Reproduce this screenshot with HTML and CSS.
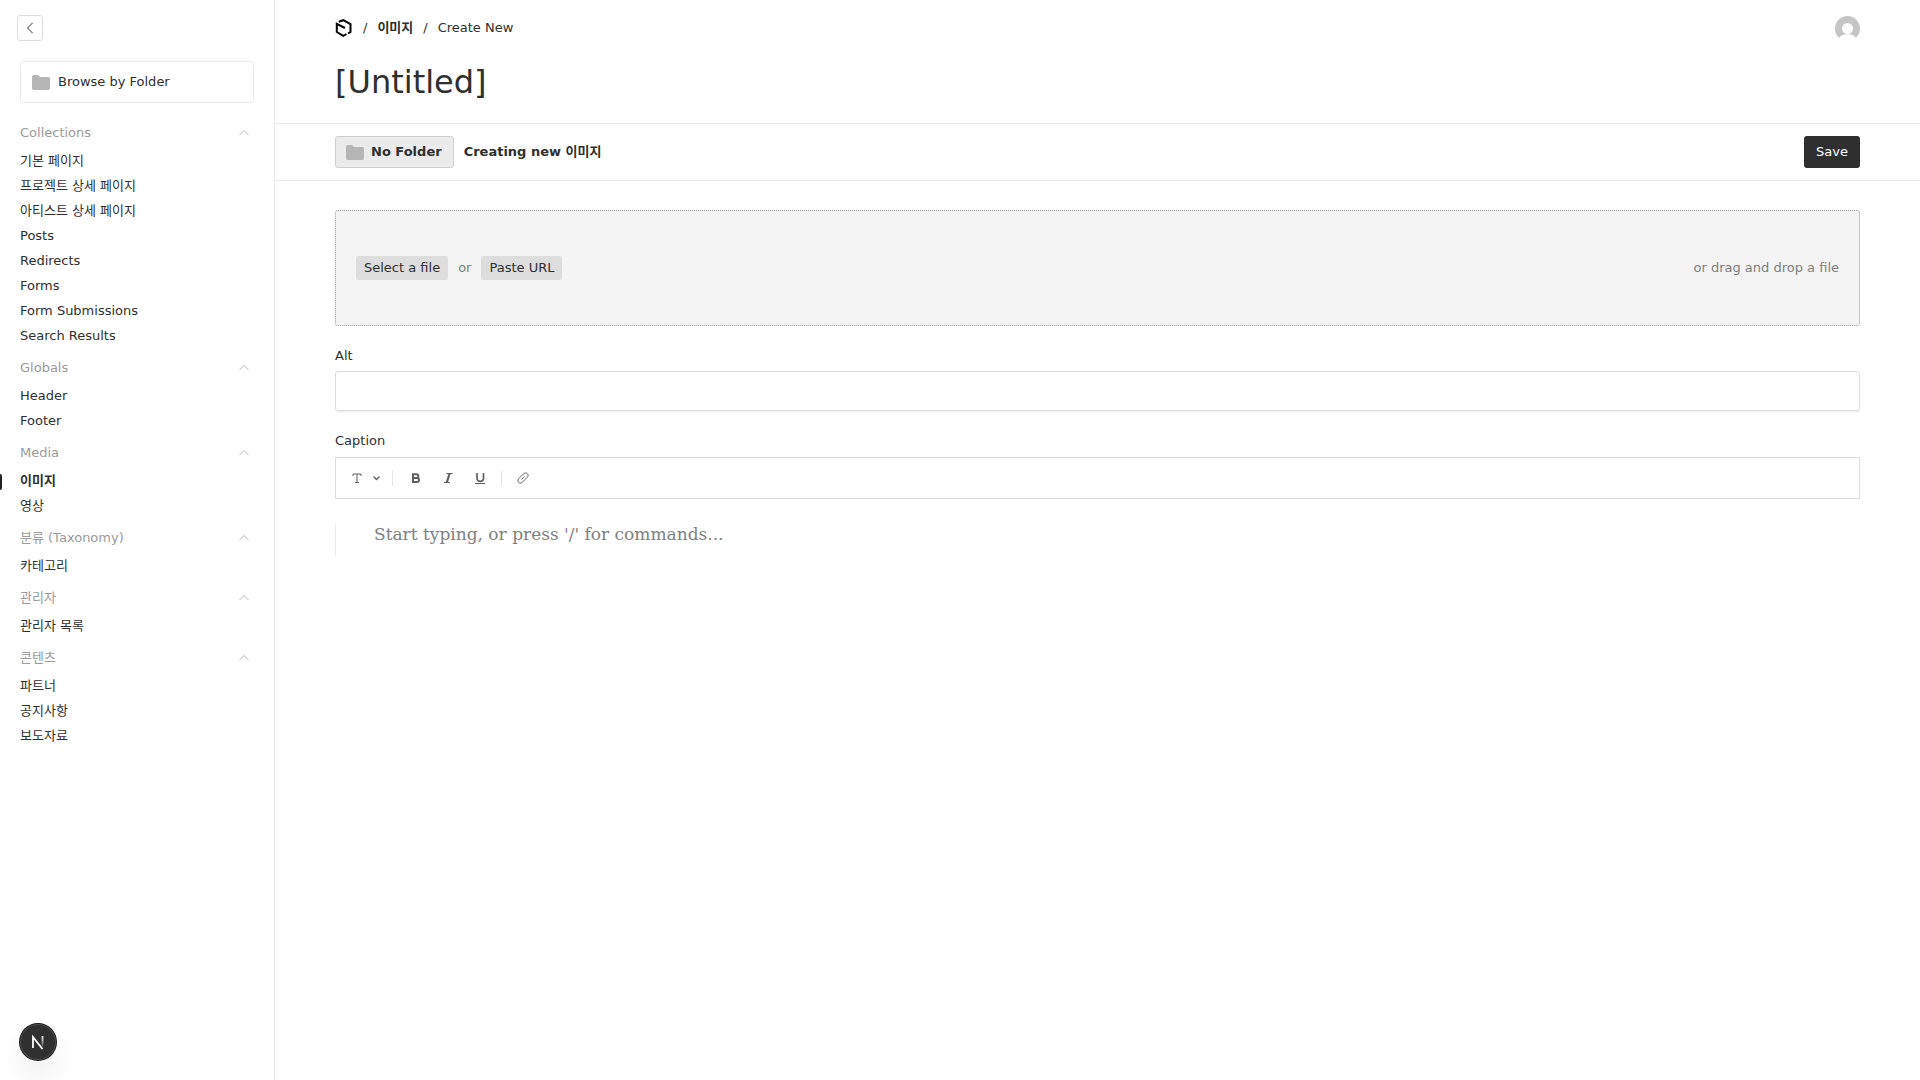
FILE: index.html
```html
<!DOCTYPE html>
<html lang="ko">
<head>
  <meta charset="UTF-8" />
  <meta name="viewport" content="width=device-width, initial-scale=1.0"/>
  <title>Creating - 이미지</title>
  <link rel="stylesheet" href="styles.css">
</head>
<body>
  <svg class="symbols" aria-hidden="true">
    <symbol id="chevron-up" viewBox="0 0 20 20">
      <path d="M5.500 12l4.500-4.500 4.500 4.500" fill="none" stroke="currentColor" />
    </symbol>
    <symbol id="folder" viewBox="0 0 18 15">
      <path d="M2 0h4l2 2h8a2 2 0 0 1 2 2v9a2 2 0 0 1-2 2H2a2 2 0 0 1-2-2V2a2 2 0 0 1 2-2z" fill="currentColor" />
    </symbol>
  </svg>

  <div class="layout">
    <!-- Sidebar -->
    <aside class="sidebar">
      <button type="button" class="nav-toggle" aria-label="Close menu">
        <svg width="20" height="20" viewBox="0 0 20 20"><path d="M12.5 5l-5 5 5 5" fill="none" stroke="currentColor" /></svg>
      </button>

      <nav class="nav">
        <a href="#" class="browse-folder">
          <svg class="folder-icon"><use href="#folder" /></svg>
          Browse by Folder
        </a>

        <div class="nav-group">
          <button type="button" class="nav-group-toggle">Collections <svg class="chevron"><use href="#chevron-up" /></svg></button>
          <a href="#">기본 페이지</a>
          <a href="#">프로젝트 상세 페이지</a>
          <a href="#">아티스트 상세 페이지</a>
          <a href="#">Posts</a>
          <a href="#">Redirects</a>
          <a href="#">Forms</a>
          <a href="#">Form Submissions</a>
          <a href="#">Search Results</a>
        </div>

        <div class="nav-group">
          <button type="button" class="nav-group-toggle">Globals <svg class="chevron"><use href="#chevron-up" /></svg></button>
          <a href="#">Header</a>
          <a href="#">Footer</a>
        </div>

        <div class="nav-group">
          <button type="button" class="nav-group-toggle">Media <svg class="chevron"><use href="#chevron-up" /></svg></button>
          <a href="#" class="active">이미지</a>
          <a href="#">영상</a>
        </div>

        <div class="nav-group">
          <button type="button" class="nav-group-toggle">분류 (Taxonomy) <svg class="chevron"><use href="#chevron-up" /></svg></button>
          <a href="#">카테고리</a>
        </div>

        <div class="nav-group">
          <button type="button" class="nav-group-toggle">관리자 <svg class="chevron"><use href="#chevron-up" /></svg></button>
          <a href="#">관리자 목록</a>
        </div>

        <div class="nav-group">
          <button type="button" class="nav-group-toggle">콘텐츠 <svg class="chevron"><use href="#chevron-up" /></svg></button>
          <a href="#">파트너</a>
          <a href="#">공지사항</a>
          <a href="#">보도자료</a>
        </div>
      </nav>
    </aside>

    <!-- Main content -->
    <main class="main">
      <header class="app-header">
        <div class="breadcrumbs">
          <a href="#" aria-label="Home">
            <svg width="18" height="18" viewBox="0 0 18 18">
              <path d="M3.8 2.800L8.300 1.200l7.200 4v7.800l-2.500 1.500M10 9L1.800 4.800V13l6.500 3.800 3.200-1.800" fill="none" stroke="#000" stroke-width="2" />
            </svg>
          </a>
          <span>/</span>
          <a href="#" class="crumb-link">이미지</a>
          <span>/</span>
          <span>Create New</span>
        </div>
        <a href="#" class="account" aria-label="Account">
          <svg width="25" height="25" viewBox="0 0 25 25">
            <circle cx="12.5" cy="12.5" r="12.5" fill="#c5c5c5" />
            <circle cx="12.5" cy="12.5" r="5.5" fill="#fff" />
            <path d="M3 23.500C5 20 7.500 18.300 12.500 18.300S20 20 22 23.500V25H3z" fill="#fff" />
          </svg>
        </a>
      </header>

      <div class="title-row">
        <h1>[Untitled]</h1>
      </div>

      <div class="doc-controls">
        <button type="button" class="folder-btn">
          <svg class="folder-icon"><use href="#folder" /></svg>
          No Folder
        </button>
        <p class="doc-status">Creating new 이미지</p>
        <button type="submit" form="mediaForm" class="save-btn">Save</button>
      </div>

      <form id="mediaForm" class="edit-form">
        <div class="dropzone">
          <button type="button" class="pill-btn">Select a file</button>
          <span>or</span>
          <button type="button" class="pill-btn">Paste URL</button>
          <span class="drag-text">or drag and drop a file</span>
        </div>

        <div class="field">
          <label for="alt">Alt</label>
          <input type="text" id="alt" name="alt" />
        </div>

        <div class="field">
          <label for="caption">Caption</label>
          <div class="toolbar">
            <button type="button" class="format-btn" aria-label="Text format">
              <svg width="20" height="20" viewBox="0 0 20 20"><path d="M7 8V6h8v2M11 6v8.500M9 14.500h4" fill="none" stroke="currentColor" /></svg>
              <svg width="20" height="20" viewBox="0 0 20 20"><path d="M7.500 8.500l3 3 3-3" fill="none" stroke="currentColor" stroke-width="1.300" /></svg>
            </button>
            <span class="divider"></span>
            <button type="button" class="tool-btn" aria-label="Bold">
              <svg width="20" height="20" viewBox="0 0 20 20"><path d="M8 6.200h3.500a1.800 1.800 0 0 1 0 3.700H8zM8 9.900h4a2 2 0 0 1 0 4.100H8z" fill="none" stroke="currentColor" stroke-width="2" /></svg>
            </button>
            <button type="button" class="tool-btn" aria-label="Italic">
              <svg width="20" height="20" viewBox="0 0 20 20"><path d="M9.500 5.500h6M7 14.500h6" stroke="currentColor" /><path d="M12.700 5.500l-3 9" stroke="currentColor" stroke-width="2.200" /></svg>
            </button>
            <button type="button" class="tool-btn" aria-label="Underline">
              <svg width="20" height="20" viewBox="0 0 20 20"><path d="M8 5v5.200c0 4.200 6.500 4.200 6.500 0V5" fill="none" stroke="currentColor" stroke-width="1.700" /><path d="M6 15.500h10" stroke="currentColor" /></svg>
            </button>
            <span class="divider"></span>
            <button type="button" class="tool-btn" aria-label="Link">
              <svg width="20" height="20" viewBox="0 0 20 20"><path d="M7.500 11.500l3-3M7.200 8.200l2.500-2.500c2.800-2.200 5.900.8 3.600 3.600L10.800 11.800M7.200 8.200L4.700 10.700c-2.300 2.800.8 5.900 3.600 3.600l2.500-2.500" fill="none" stroke="currentColor" /></svg>
            </button>
          </div>
          <textarea id="caption" name="caption" rows="1" placeholder="Start typing, or press '/' for commands..."></textarea>
        </div>
      </form>
    </main>
  </div>

  <!-- Dev tools badge -->
  <button type="button" class="dev-badge" aria-label="Open dev tools">
    <svg width="36" height="36" viewBox="0 0 36 36">
      <defs>
        <linearGradient id="fade" x1="0" y1="12" x2="0" y2="22" gradientUnits="userSpaceOnUse">
          <stop offset="0" stop-color="#fff" />
          <stop offset="1" stop-color="#fff" stop-opacity="0.2" />
        </linearGradient>
      </defs>
      <path d="M13 24V13L22.500 25" fill="none" stroke="#fff" stroke-width="1.800" />
      <path d="M22.500 12v10" stroke="url(#fade)" stroke-width="1.800" />
    </svg>
  </button>
</body>
</html>
```

FILE: styles.css
```css
* {
  box-sizing: border-box;
}
body {
  margin: 0;
  font-family: "DejaVu Sans", "Noto Sans CJK KR", sans-serif;
  font-size: 13px;
  line-height: 20px;
  color: #2f2f2f;
  background-color: #fff;
}
a {
  color: inherit;
  text-decoration: none;
}
button {
  font: inherit;
  color: inherit;
  background: none;
  border: none;
  padding: 0;
  cursor: pointer;
}
svg {
  display: block;
  flex-shrink: 0;
}
.symbols {
  display: none;
}
.layout {
  display: flex;
  min-height: 100vh;
}

/* Sidebar */
.sidebar {
  width: 275px;
  flex-shrink: 0;
  border-right: 1px solid #ebebeb;
  padding: 15px 20px;
}
.nav-toggle {
  display: flex;
  align-items: center;
  justify-content: center;
  width: 26px;
  height: 26px;
  margin-left: -3px;
  border: 1px solid #dddddd;
  border-radius: 3px;
}
.nav {
  padding-top: 20px;
}
.browse-folder {
  display: flex;
  align-items: center;
  gap: 8px;
  height: 42px;
  padding: 0 11px;
  margin-bottom: 20px;
  border: 1px solid #ebebeb;
  border-radius: 4px;
}
.folder-icon {
  width: 18px;
  height: 15px;
  color: #b5b5b5;
}
.nav-group {
  margin-bottom: 9px;
}
.nav-group-toggle {
  display: flex;
  justify-content: space-between;
  align-items: center;
  width: 100%;
  color: #9a9a9a;
  margin-bottom: 6px;
}
.chevron {
  width: 20px;
  height: 20px;
  color: #b5b5b5;
}
.nav-group a {
  display: block;
  line-height: 20px;
  padding: 2px 0 3px;
}
.nav-group .active {
  position: relative;
  font-weight: bold;
}
.nav-group .active::before {
  content: "";
  position: absolute;
  left: -20px;
  top: 5px;
  width: 2px;
  height: 16px;
  background-color: #222;
  border-radius: 0 2px 2px 0;
}

/* Header */
.main {
  flex: 1;
  min-width: 0;
}
.app-header {
  display: flex;
  align-items: center;
  justify-content: space-between;
  height: 56px;
  padding: 0 60px;
}
.breadcrumbs {
  display: flex;
  align-items: center;
  gap: 10px;
}
.crumb-link {
  font-weight: 600;
}
.title-row {
  padding: 6px 60px 20px;
  border-bottom: 1px solid #ebebeb;
}
h1 {
  margin: 0;
  font-size: 32px;
  line-height: 41px;
  font-weight: normal;
}
.doc-controls {
  display: flex;
  align-items: center;
  gap: 10px;
  height: 57px;
  padding: 0 60px;
  border-bottom: 1px solid #ebebeb;
}
.folder-btn {
  display: flex;
  align-items: center;
  gap: 7px;
  height: 32px;
  padding: 0 11px 0 10px;
  font-weight: bold;
  background-color: #ebebeb;
  border: 1px solid #d0d0d0;
  border-radius: 3px;
}
.doc-status {
  margin: 0;
  font-weight: bold;
}
.save-btn {
  margin-left: auto;
  height: 32px;
  padding: 0 12px;
  color: #fff;
  background-color: #2f2f2f;
  border-radius: 3px;
}

/* Form */
.edit-form {
  padding: 29px 60px;
}
.dropzone {
  display: flex;
  align-items: center;
  gap: 10px;
  height: 116px;
  padding: 0 20px;
  color: #808080;
  background-color: #f4f4f4;
  border: 1px dotted #9a9a9a;
  border-radius: 3px;
}
.pill-btn {
  height: 24px;
  padding: 0 8px;
  color: #2f2f2f;
  background-color: #dddddd;
  border-radius: 3px;
}
.drag-text {
  margin-left: auto;
}
.field {
  margin-top: 20px;
}
label {
  display: block;
  margin-bottom: 5px;
}
.field input {
  display: block;
  width: 100%;
  height: 40px;
  padding: 8px 15px;
  font: inherit;
  border: 1px solid #dddddd;
  border-radius: 3px;
  box-shadow: 0 2px 2px -1px rgba(0, 0, 0, 0.1);
}
.toolbar {
  display: flex;
  align-items: center;
  height: 42px;
  margin-top: 6px;
  padding: 0 10px;
  color: #606060;
  border: 1px solid #dddddd;
}
.format-btn {
  display: flex;
}
.tool-btn {
  padding: 0 6px;
}
.divider {
  width: 1px;
  height: 15px;
  margin: 0 6px;
  background-color: #e4e4e4;
}
.field textarea {
  display: block;
  width: 100%;
  height: 33px;
  margin-top: 24px;
  padding: 0 38px;
  font-family: "DejaVu Serif", "Noto Sans CJK KR", serif;
  font-size: 17px;
  line-height: 22px;
  color: #2f2f2f;
  border: none;
  border-left: 1px solid #ebebeb;
  outline: none;
  resize: none;
}
textarea::placeholder {
  color: #808080;
}

.dev-badge {
  position: fixed;
  left: 20px;
  bottom: 20px;
  width: 36px;
  height: 36px;
  background-color: #303030;
  border-radius: 50%;
  box-shadow: 0 0 0 1px #171717, inset 0 0 0 1px #4a4a4a, 0 16px 32px -8px rgba(0, 0, 0, 0.24);
}
```
